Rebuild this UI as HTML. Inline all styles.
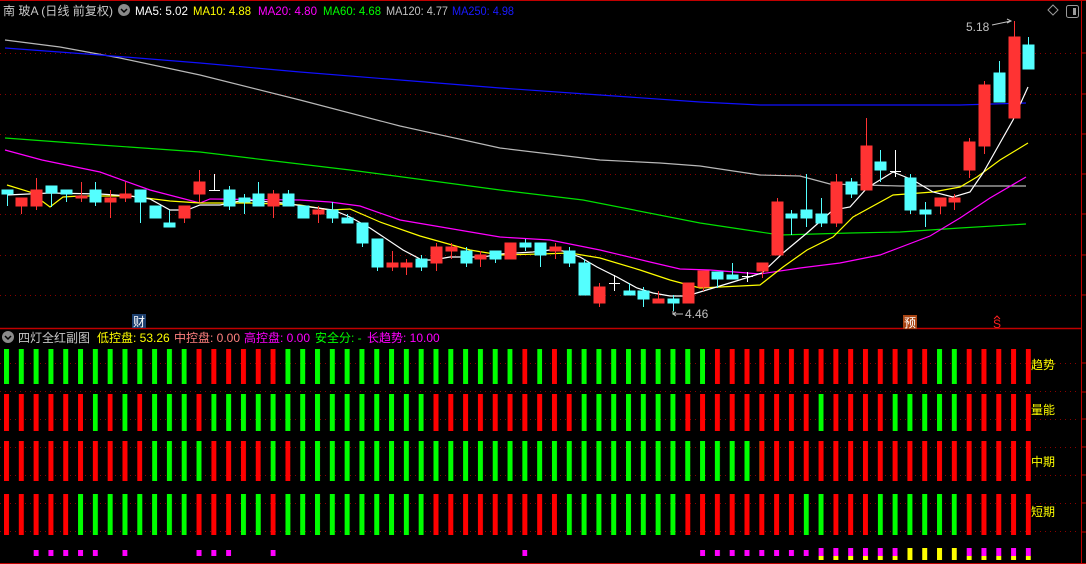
<!DOCTYPE html>
<html><head><meta charset="utf-8"><style>
html,body{margin:0;padding:0;background:#000;width:1086px;height:564px;overflow:hidden}
svg{display:block}
text{font-family:"Liberation Sans","Noto Sans CJK SC",sans-serif;font-size:12px}
</style></head><body>
<svg width="1086" height="564" viewBox="0 0 1086 564" xmlns="http://www.w3.org/2000/svg">
<defs>
<pattern id="pg" x="4" y="0" width="14.81" height="600" patternUnits="userSpaceOnUse"><rect width="5" height="600" fill="#00ff00"/></pattern>
<pattern id="pr" x="4" y="0" width="14.81" height="600" patternUnits="userSpaceOnUse"><rect width="5" height="600" fill="#ff0000"/></pattern>
<pattern id="pm" x="4" y="0" width="14.81" height="600" patternUnits="userSpaceOnUse"><rect width="5" height="600" fill="#ff00ff"/></pattern>
<pattern id="py" x="4" y="0" width="14.81" height="600" patternUnits="userSpaceOnUse"><rect width="5" height="600" fill="#ffff00"/></pattern>
</defs>
<rect width="1086" height="564" fill="#000"/>
<line x1="0" y1="0.5" x2="1086" y2="0.5" stroke="#c00000"/>
<line x1="0" y1="328.5" x2="1082" y2="328.5" stroke="#c00000" stroke-width="1.5"/>
<line x1="0" y1="563.5" x2="1086" y2="563.5" stroke="#c00000"/>
<line x1="1081.5" y1="0" x2="1081.5" y2="564" stroke="#c00000"/>
<g stroke="#c00000">
<path d="M1082 53H1086M1082 94H1086M1082 134H1086M1082 174H1086M1082 214H1086M1082 255H1086M1082 295H1086M1082 363H1086M1082 392H1086M1082 419H1086M1082 447H1086M1082 475H1086M1082 503H1086M1082 532H1086"/>
</g>
<g stroke="#8a0000" stroke-dasharray="1,4">
<path d="M0 53.5H1080M0 94.5H1080M0 134.5H1080M0 174.5H1080M0 214.5H1080M0 255.5H1080M0 295.5H1080"/>
<path d="M0 363.5H1080M0 391.5H1080M0 419.5H1080M0 447.5H1080M0 475.5H1080M0 503.5H1080M0 531.5H1080"/>
</g>
<text x="3" y="15" fill="#c8c8c8" textLength="110" lengthAdjust="spacingAndGlyphs">南 玻A (日线 前复权)</text>
<circle cx="124" cy="10" r="6" fill="#8a8a8a"/><path d="M121 9l3 3 3-3" stroke="#000" stroke-width="1.5" fill="none"/>
<text x="135" y="15" fill="#ffffff" textLength="53" lengthAdjust="spacingAndGlyphs">MA5: 5.02</text>
<text x="193" y="15" fill="#ffff00" textLength="58" lengthAdjust="spacingAndGlyphs">MA10: 4.88</text>
<text x="258" y="15" fill="#ff00ff" textLength="59" lengthAdjust="spacingAndGlyphs">MA20: 4.80</text>
<text x="323" y="15" fill="#00ff00" textLength="58" lengthAdjust="spacingAndGlyphs">MA60: 4.68</text>
<text x="386" y="15" fill="#c0c0c0" textLength="62" lengthAdjust="spacingAndGlyphs">MA120: 4.77</text>
<text x="452" y="15" fill="#1a1aff" textLength="62" lengthAdjust="spacingAndGlyphs">MA250: 4.98</text>
<path d="M1053 5l5 5-5 5-5-5z" fill="none" stroke="#9a9a9a"/>
<rect x="1066.5" y="5.5" width="12" height="12" rx="2" fill="none" stroke="#9a9a9a"/><rect x="1073" y="8" width="3" height="7" fill="#9a9a9a"/>
<g fill="none" stroke-width="1.2">
<polyline stroke="#b8b8b8" points="5,40 60,47 120,58 200,75 300,100 400,126 500,148 600,160 660,163 700,166 760,175 800,176 830,184 900,186 1026,186"/>
<polyline stroke="#1010ff" points="5,48 100,55 200,63 300,72 400,80 500,88 600,95 700,102 760,105 960,105 1026,103"/>
<polyline stroke="#00e000" points="5,138 100,145 200,152 266,160 350,170 500,190 583,200 700,223 760,232 780,235 850,233 900,232 960,228 1026,224"/>
<polyline stroke="#ff00ff" points="5,150 42,160 100,172 150,190 200,203 210,199 300,200 330,202 360,206 400,220 500,237 550,240 600,250 650,262 680,269 710,270 760,274 800,268 840,263 880,255 930,236 960,218 990,198 1026,177"/>
<polyline stroke="#ffff00" points="7,185 30,192 50,207 63,197 80,196 130,196 170,201 200,203 250,203 300,205 330,210 350,209 380,222 420,236 470,250 500,255 540,254 570,253 600,258 640,270 670,280 700,288 760,285 783,267 807,250 833,237 853,217 893,195 933,192 960,187 977,177 1000,160 1028,143"/>
<polyline stroke="#ffffff" points="7,195 50,193 100,194 130,196 150,199 170,210 187,210 200,205 220,205 245,200 283,203 310,207 333,210 350,217 370,228 403,250 422,260 433,260 450,257 483,257 500,254 533,252 550,250 563,251 580,257 597,267 617,277 637,288 653,293 670,296 687,296 700,292 733,282 762,273 783,253 807,233 833,210 850,207 867,188 893,172 913,180 933,192 953,197 970,192 983,173 1000,143 1013,120 1028,87"/>
</g>
<g stroke-width="1">
<g stroke="#54ffff" fill="#54ffff">
<path d="M7.5 190V206M51.5 186V207M66.5 190V202M95.5 182V206M140.5 190V223M155.5 206V218M169.5 210V227M229.5 186V210M244.5 194V214M258.5 182V206M288.5 190V206M303.5 206V218M332.5 202V223M347.5 214V223M362.5 223V247M377.5 239V271M421.5 255V271M466.5 247V267M495.5 251V263M525.5 239V251M540.5 243V267M569.5 247V267M584.5 259V295M629.5 283V295M643.5 287V307M673.5 295V311M717.5 272V288M732.5 263V279M791.5 210V235M806.5 174V227M821.5 198V227M851.5 178V198M880.5 150V182M910.5 174V214M925.5 202V227M999.5 61V102M1028.5 37V69"/>
<rect x="2" y="190" width="11" height="4"/><rect x="46" y="186" width="11" height="7"/><rect x="61" y="190" width="11" height="4"/><rect x="90" y="190" width="11" height="12"/><rect x="135" y="190" width="11" height="12"/><rect x="150" y="206" width="11" height="12"/><rect x="164" y="223" width="11" height="4"/><rect x="224" y="190" width="11" height="16"/><rect x="239" y="198" width="11" height="4"/><rect x="253" y="194" width="11" height="12"/><rect x="283" y="194" width="11" height="12"/><rect x="298" y="206" width="11" height="12"/><rect x="327" y="210" width="11" height="8"/><rect x="342" y="218" width="11" height="5"/><rect x="357" y="223" width="11" height="20"/><rect x="372" y="239" width="11" height="28"/><rect x="416" y="259" width="11" height="8"/><rect x="461" y="251" width="11" height="12"/><rect x="490" y="251" width="11" height="8"/><rect x="520" y="243" width="11" height="4"/><rect x="535" y="243" width="11" height="12"/><rect x="564" y="251" width="11" height="12"/><rect x="579" y="263" width="11" height="32"/><rect x="624" y="291" width="11" height="4"/><rect x="638" y="291" width="11" height="8"/><rect x="668" y="299" width="11" height="4"/><rect x="712" y="272" width="11" height="7"/><rect x="727" y="275" width="11" height="4"/><rect x="786" y="214" width="11" height="4"/><rect x="801" y="210" width="11" height="8"/><rect x="816" y="214" width="11" height="9"/><rect x="846" y="182" width="11" height="12"/><rect x="875" y="162" width="11" height="8"/><rect x="905" y="178" width="11" height="32"/><rect x="920" y="210" width="11" height="4"/><rect x="994" y="73" width="11" height="29"/><rect x="1023" y="45" width="11" height="24"/>
</g>
<g stroke="#ff3333" fill="#ff3333">
<path d="M21.5 198V214M36.5 178V210M81.5 182V202M110.5 190V218M125.5 182V202M184.5 206V223M199.5 170V202M273.5 190V218M318.5 206V223M392.5 251V271M406.5 259V275M436.5 243V271M451.5 243V259M480.5 251V267M510.5 243V259M555.5 243V259M599.5 283V307M658.5 291V303M688.5 283V303M703.5 271V291M762.5 263V278M777.5 198V255M836.5 174V227M866.5 118V190M940.5 198V214M954.5 194V210M969.5 138V178M984.5 81V154M1014.5 21V118"/>
<rect x="16" y="198" width="11" height="8"/><rect x="31" y="190" width="11" height="16"/><rect x="76" y="196" width="11" height="2"/><rect x="105" y="198" width="11" height="4"/><rect x="120" y="194" width="11" height="4"/><rect x="179" y="206" width="11" height="12"/><rect x="194" y="182" width="11" height="12"/><rect x="268" y="194" width="11" height="12"/><rect x="313" y="210" width="11" height="4"/><rect x="387" y="263" width="11" height="4"/><rect x="401" y="263" width="11" height="4"/><rect x="431" y="247" width="11" height="16"/><rect x="446" y="247" width="11" height="4"/><rect x="475" y="255" width="11" height="4"/><rect x="505" y="243" width="11" height="16"/><rect x="550" y="247" width="11" height="4"/><rect x="594" y="287" width="11" height="16"/><rect x="653" y="299" width="11" height="4"/><rect x="683" y="283" width="11" height="20"/><rect x="698" y="271" width="11" height="16"/><rect x="757" y="263" width="11" height="8"/><rect x="772" y="202" width="11" height="53"/><rect x="831" y="182" width="11" height="41"/><rect x="861" y="146" width="11" height="44"/><rect x="935" y="198" width="11" height="8"/><rect x="949" y="198" width="11" height="4"/><rect x="964" y="142" width="11" height="28"/><rect x="979" y="85" width="11" height="61"/><rect x="1009" y="37" width="11" height="81"/>
</g>
<g stroke="#ffffff" fill="none">
<path d="M214.5 174V190M209 190.5H220M614.5 275V291M609 283.5H620M747.5 272V282M742 276.5H753M895.5 150V177M890 171.5H901"/>
</g>
</g>
<text x="966" y="31" fill="#c0c0c0">5.18</text>
<path d="M992 25L1011 21M1007 19l4 2-4 2" stroke="#c0c0c0" fill="none"/>
<path d="M673 311V314H683M676 312l-3 2 3 2" stroke="#c0c0c0" fill="none"/>
<text x="685" y="318" fill="#c0c0c0">4.46</text>
<rect x="132" y="314" width="14" height="14" fill="#1c3f6e"/><text x="133" y="326" fill="#ffffff">财</text>
<rect x="903" y="315" width="14" height="14" fill="#a84412"/><text x="904" y="327" fill="#ffffff">预</text>
<text x="993" y="328" fill="#ff2020" font-size="12">S</text><path d="M994 319l3-3 3 3" stroke="#ff2020" fill="none"/>
<circle cx="8" cy="337" r="6" fill="#8a8a8a"/><path d="M5 336l3 3 3-3" stroke="#000" stroke-width="1.5" fill="none"/>
<text x="18" y="342" fill="#c8c8c8">四灯全红副图</text>
<text x="97" y="342" fill="#ffff00">低控盘: 53.26</text>
<text x="174" y="342" fill="#ff8080">中控盘: 0.00</text>
<text x="244" y="342" fill="#ff00ff">高控盘: 0.00</text>
<text x="315" y="342" fill="#00ff00">安全分: -</text>
<text x="367" y="342" fill="#ff00ff">长趋势: 10.00</text>
<rect x="4" y="349" width="182.7" height="35" fill="url(#pg)"/>
<rect x="196.5" y="349" width="79" height="35" fill="url(#pr)"/>
<rect x="285.4" y="349" width="227" height="35" fill="url(#pg)"/>
<rect x="522.3" y="349" width="5" height="35" fill="url(#pr)"/>
<rect x="537.2" y="349" width="5" height="35" fill="url(#pg)"/>
<rect x="552" y="349" width="5" height="35" fill="url(#pr)"/>
<rect x="566.8" y="349" width="138.3" height="35" fill="url(#pg)"/>
<rect x="714.9" y="349" width="212.4" height="35" fill="url(#pr)"/>
<rect x="937" y="349" width="20" height="35" fill="url(#pg)"/>
<rect x="966.6" y="349" width="64.3" height="35" fill="url(#pr)"/>
<rect x="4" y="394" width="79" height="37" fill="url(#pr)"/>
<rect x="92.8" y="394" width="5" height="37" fill="url(#pg)"/>
<rect x="107.6" y="394" width="5" height="37" fill="url(#pr)"/>
<rect x="122.4" y="394" width="5" height="37" fill="url(#pg)"/>
<rect x="137.2" y="394" width="5" height="37" fill="url(#pr)"/>
<rect x="152" y="394" width="35" height="37" fill="url(#pg)"/>
<rect x="196.5" y="394" width="5" height="37" fill="url(#pr)"/>
<rect x="211.3" y="394" width="212.4" height="37" fill="url(#pg)"/>
<rect x="433.5" y="394" width="138.3" height="37" fill="url(#pr)"/>
<rect x="581.6" y="394" width="94" height="37" fill="url(#pg)"/>
<rect x="685.3" y="394" width="123.5" height="37" fill="url(#pr)"/>
<rect x="818.6" y="394" width="5" height="37" fill="url(#pg)"/>
<rect x="833.4" y="394" width="50" height="37" fill="url(#pr)"/>
<rect x="892.6" y="394" width="64.3" height="37" fill="url(#pg)"/>
<rect x="966.6" y="394" width="64.3" height="37" fill="url(#pr)"/>
<rect x="4" y="441" width="138.3" height="40" fill="url(#pr)"/>
<rect x="152.1" y="441" width="49.5" height="40" fill="url(#pg)"/>
<rect x="211.3" y="441" width="49.5" height="40" fill="url(#pr)"/>
<rect x="270.6" y="441" width="5" height="40" fill="url(#pg)"/>
<rect x="285.4" y="441" width="5" height="40" fill="url(#pr)"/>
<rect x="300.2" y="441" width="464.2" height="40" fill="url(#pg)"/>
<rect x="759.3" y="441" width="271.6" height="40" fill="url(#pr)"/>
<rect x="4" y="494" width="64.3" height="41" fill="url(#pr)"/>
<rect x="78" y="494" width="108.7" height="41" fill="url(#pg)"/>
<rect x="196.5" y="494" width="34.7" height="41" fill="url(#pr)"/>
<rect x="241" y="494" width="20" height="41" fill="url(#pg)"/>
<rect x="270.6" y="494" width="5" height="41" fill="url(#pr)"/>
<rect x="285.4" y="494" width="138.3" height="41" fill="url(#pg)"/>
<rect x="433.5" y="494" width="123.5" height="41" fill="url(#pr)"/>
<rect x="566.8" y="494" width="108.7" height="41" fill="url(#pg)"/>
<rect x="685.3" y="494" width="108.7" height="41" fill="url(#pr)"/>
<rect x="803.7" y="494" width="20" height="41" fill="url(#pg)"/>
<rect x="833.4" y="494" width="34.7" height="41" fill="url(#pr)"/>
<rect x="877.8" y="494" width="79" height="41" fill="url(#pg)"/>
<rect x="966.6" y="494" width="64.3" height="41" fill="url(#pr)"/>
<rect x="33.6" y="550" width="64.3" height="6" fill="url(#pm)"/>
<rect x="122.4" y="550" width="5" height="6" fill="url(#pm)"/>
<rect x="196.5" y="550" width="34.7" height="6" fill="url(#pm)"/>
<rect x="270.6" y="550" width="5" height="6" fill="url(#pm)"/>
<rect x="522.3" y="550" width="5" height="6" fill="url(#pm)"/>
<rect x="700.1" y="550" width="108.7" height="6" fill="url(#pm)"/>
<rect x="818.6" y="548" width="79" height="8" fill="url(#pm)"/>
<rect x="818.6" y="556" width="79" height="4" fill="url(#py)"/>
<rect x="907.4" y="548" width="49.5" height="12" fill="url(#py)"/>
<rect x="966.6" y="548" width="64.3" height="8" fill="url(#pm)"/>
<rect x="966.6" y="556" width="64.3" height="4" fill="url(#py)"/>
<text x="1031" y="369" fill="#ffff00">趋势</text>
<text x="1031" y="414" fill="#ffff00">量能</text>
<text x="1031" y="466" fill="#ffff00">中期</text>
<text x="1031" y="516" fill="#ffff00">短期</text>
</svg>
</body></html>
